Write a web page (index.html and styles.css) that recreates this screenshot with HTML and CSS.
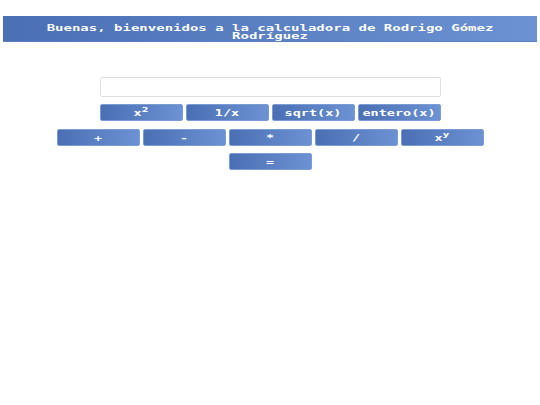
FILE: index.html
```html
<!DOCTYPE html>
<html lang="es">
<head>
<meta charset="utf-8">
<title>Calculadora</title>
<link rel="stylesheet" href="styles.css">
</head>
<body>
<header class="banner">
  <h1 class="title">Buenas, bienvenidos a la calculadora de Rodrigo Gómez Rodríguez</h1>
</header>
<main class="calc">
  <input class="display" type="text">
  <div class="row">
    <button class="btn"><span class="lbl">x<sup>2</sup></span></button>
    <button class="btn"><span class="lbl">1/x</span></button>
    <button class="btn"><span class="lbl">sqrt(x)</span></button>
    <button class="btn"><span class="lbl">entero(x)</span></button>
  </div>
  <div class="row">
    <button class="btn"><span class="lbl">+</span></button>
    <button class="btn"><span class="lbl">-</span></button>
    <button class="btn"><span class="lbl">*</span></button>
    <button class="btn"><span class="lbl">/</span></button>
    <button class="btn"><span class="lbl">x<sup>y</sup></span></button>
  </div>
  <div class="row">
    <button class="btn"><span class="lbl">=</span></button>
  </div>
</main>
</body>
</html>
```

FILE: styles.css
```css
html, body {
  margin: 0;
  background: #ffffff;
}
body {
  padding: 16px 3px 0 3px;
  font-family: "DejaVu Sans Mono", "Liberation Mono", monospace;
}
.banner {
  background: linear-gradient(to right, #4a6fb3, #6c92d3);
  height: 26px;
  padding: 3px 4px 0 4px;
  box-sizing: border-box;
  border-bottom: 1px solid #5d81c0;
}
.title {
  margin: 0;
  color: #ffffff;
  font-size: 14px;
  font-weight: bold;
  line-height: 13px;
  text-align: center;
  transform: scaleY(0.68);
}
.calc {
  display: flex;
  flex-direction: column;
  align-items: center;
  padding-top: 35px;
}
.display {
  width: 341px;
  height: 20px;
  box-sizing: border-box;
  border: 1px solid #e0e0e0;
  border-radius: 2px;
  margin: 0 0 7px 0;
  padding: 0;
  background: #fff;
}
.row {
  display: flex;
  gap: 3px;
  margin-bottom: 8px;
}
.row:nth-of-type(2) {
  margin-bottom: 7px;
}
.btn {
  width: 83px;
  height: 17px;
  box-sizing: border-box;
  border: 1px solid #7b9bd4;
  border-radius: 2px;
  background: linear-gradient(to right, #4a6fb3, #6c92d3);
  color: #ffffff;
  font-family: "DejaVu Sans Mono", "Liberation Mono", monospace;
  font-size: 13.5px;
  font-weight: bold;
  line-height: 15px;
  padding: 0;
  text-align: center;
}
.lbl {
  display: inline-block;
  transform: scaleY(0.68);
}
.btn sup {
  font-size: 11px;
  line-height: 0;
  vertical-align: 5px;
}
```
